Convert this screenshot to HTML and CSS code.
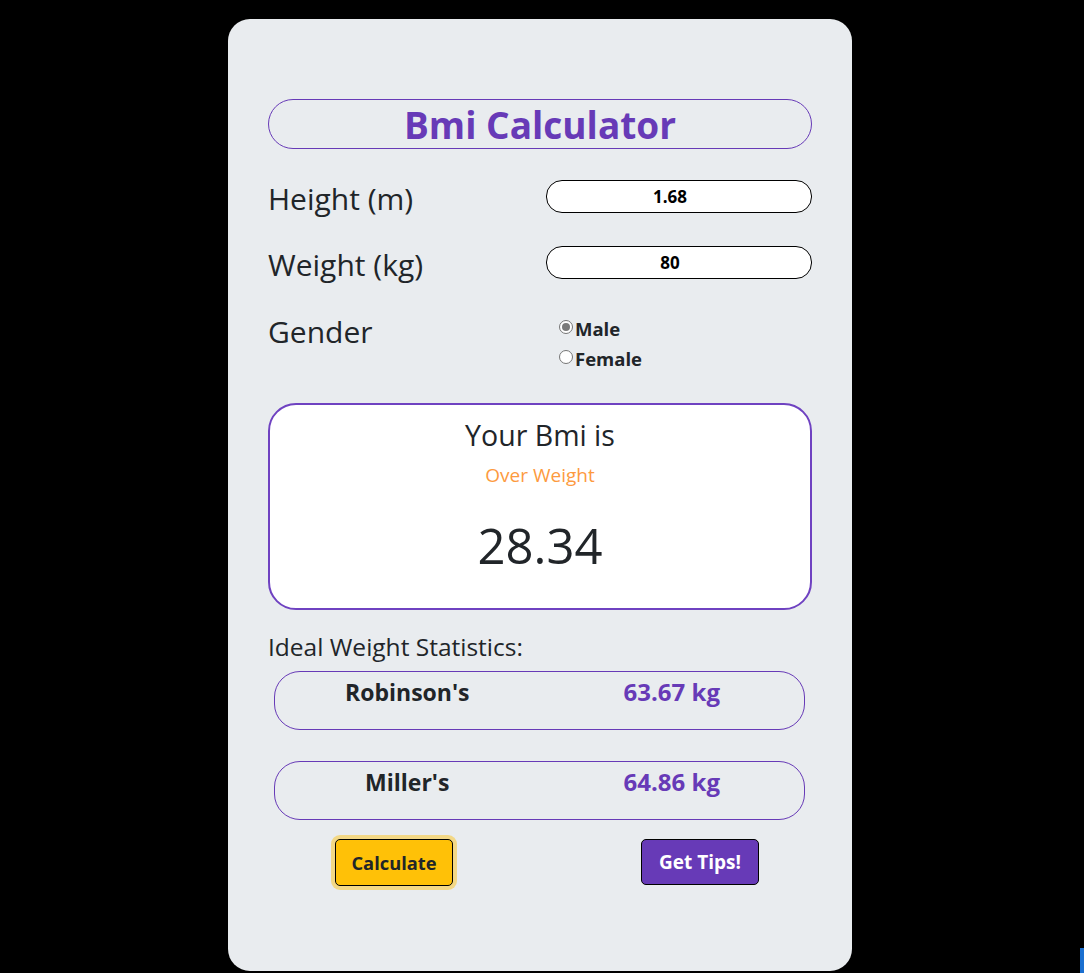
FILE: index.html
```html
<!DOCTYPE html>
<html>
<head>
<meta charset="utf-8">
<link rel="stylesheet" href="styles.css">
</head>
<body>
<div class="page">
  <div class="card">
    <h1 class="title">Bmi Calculator</h1>
    <div class="field">
      <label class="label">Height (m)</label>
      <input class="input" type="text" value="1.68">
    </div>
    <div class="field">
      <label class="label">Weight (kg)</label>
      <input class="input" type="text" value="80">
    </div>
    <div class="field gender">
      <span class="label">Gender</span>
      <div class="radios">
        <label class="radio"><span class="dot checked"></span>Male</label>
        <label class="radio"><span class="dot"></span>Female</label>
      </div>
    </div>
    <div class="result">
      <div class="result-title">Your Bmi is</div>
      <div class="result-status">Over Weight</div>
      <div class="result-value">28.34</div>
    </div>
    <div class="stats-title">Ideal Weight Statistics:</div>
    <div class="stat">
      <span class="stat-name">Robinson's</span>
      <span class="stat-value">63.67 kg</span>
    </div>
    <div class="stat">
      <span class="stat-name">Miller's</span>
      <span class="stat-value">64.86 kg</span>
    </div>
    <div class="actions">
      <button class="btn btn-calc">Calculate</button>
      <button class="btn btn-tips">Get Tips!</button>
    </div>
  </div>
</div>
<div class="edge"></div>
</body>
</html>
```
FILE: styles.css
```css
html, body {
  margin: 0;
  padding: 0;
  background: #000;
  font-family: "Open Sans", "Noto Sans", sans-serif;
  color: #212529;
}
.page {
  width: 1084px;
  height: 973px;
  overflow: hidden;
}
.card {
  box-sizing: border-box;
  margin: 19px 0 0 228px;
  width: 624px;
  height: 952px;
  background: #e9ecef;
  border-radius: 22px;
  padding: 80px 40px 0 40px;
}
.title {
  box-sizing: border-box;
  margin: 0;
  height: 50px;
  border: 1px solid #673ab7;
  border-radius: 25px;
  color: #673ab7;
  font-size: 37px;
  font-weight: 700;
  text-align: center;
  line-height: 50px;
}
.field {
  display: flex;
  align-items: center;
  justify-content: space-between;
  height: 33px;
  margin-top: 31px;
}
.field + .field { margin-top: 33px; }
.label {
  font-size: 30px;
  line-height: 40px;
  margin-top: 4px;
}
.input {
  box-sizing: border-box;
  width: 266px;
  height: 33px;
  border: 1px solid #000;
  border-radius: 16px;
  background: #fff;
  text-align: center;
  font-family: "Open Sans", "Noto Sans", sans-serif;
  font-weight: 700;
  font-size: 17px;
  color: #000;
  outline: none;
  padding: 0 18px 0 0;
}
.gender {
  align-items: flex-start;
  height: 61px;
}
.gender .label { margin-top: 0; }
.radios {
  width: 253px;
  display: flex;
  flex-direction: column;
  gap: 5px;
  margin-top: 4px;
}
.radio {
  display: flex;
  align-items: center;
  font-size: 18.5px;
  font-weight: 700;
  line-height: 25px;
}
.dot {
  box-sizing: border-box;
  width: 14px;
  height: 14px;
  border: 1px solid #767676;
  border-radius: 50%;
  background: #fff;
  margin-right: 2px;
  margin-top: -4px;
  position: relative;
}
.dot.checked::after {
  content: "";
  position: absolute;
  left: 2px;
  top: 2px;
  width: 8px;
  height: 8px;
  border-radius: 50%;
  background: #7a7a7a;
}
.result {
  box-sizing: border-box;
  margin-top: 30px;
  height: 207px;
  border: 2px solid #6f42c1;
  border-radius: 28px;
  background: #fff;
  text-align: center;
  padding-top: 10px;
}
.result-title {
  font-size: 28.5px;
  line-height: 40px;
}
.result-status {
  color: #fd9a3e;
  font-size: 19px;
  line-height: 40px;
}
.result-value {
  font-size: 49px;
  line-height: 74px;
  margin-top: 13px;
}
.stats-title {
  margin-top: 20px;
  font-size: 24.5px;
  line-height: 34px;
}
.stat {
  box-sizing: border-box;
  margin: 7px 7px 0 6px;
  height: 59px;
  border: 1px solid #673ab7;
  border-radius: 26px;
  display: flex;
  padding-top: 5px;
  font-size: 23px;
  font-weight: 700;
  line-height: 30px;
}
.stat + .stat { margin-top: 31px; }
.stat-name, .stat-value {
  flex: 1;
  text-align: center;
}
.stat-value { color: #673ab7; font-size: 24px; }
.actions {
  display: flex;
  margin-top: 19px;
  padding-left: 67px;
}
.btn {
  box-sizing: border-box;
  height: 47px;
  width: 118px;
  border: 1px solid #000;
  border-radius: 5px;
  font-family: "Open Sans", "Noto Sans", sans-serif;
  font-size: 18.3px;
  font-weight: 700;
  padding: 0;
}
.btn-calc {
  background: #ffc107;
  color: #212529;
  box-shadow: 0 0 0 4px rgba(255, 193, 7, 0.45);
}
.btn-tips {
  margin-left: 188px;
  height: 46px;
  background: #673ab7;
  color: #fff;
  font-size: 19px;
}
.edge {
  position: absolute;
  right: 0;
  top: 948px;
  width: 4px;
  height: 25px;
  background: #1a6fd0;
}
```
